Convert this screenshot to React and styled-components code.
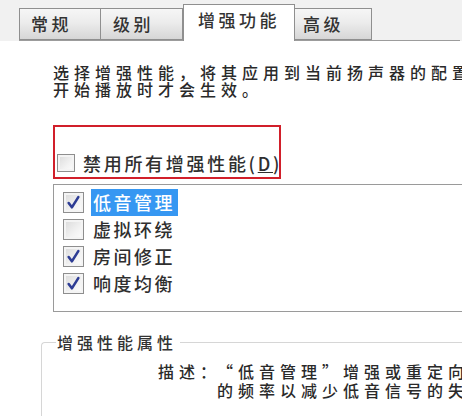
import React from 'react';
import styled, { createGlobalStyle } from 'styled-components';

const GlobalStyle = createGlobalStyle`
  html, body {
    margin: 0;
    padding: 0;
    background: #ffffff;
  }
  body {
    font-family: "Noto Sans CJK SC", "Liberation Sans", sans-serif;
    font-weight: 500;
    color: #2a2a2a;
  }
`;

const Window = styled.div`
  width: 462px;
  height: 416px;
  overflow: hidden;
  background: #ffffff;
  display: flex;
  flex-direction: column;

  & > * {
    flex-shrink: 0;
  }
`;

const TabStrip = styled.div`
  background: #f1f1f1;
  padding-left: 19px;
  padding-right: 2px;
  height: 41px;
  display: flex;
`;

const TabRow = styled.div`
  flex: 1;
  display: flex;
  align-items: flex-end;
  border-bottom: 1px solid #9c9c9c;
`;

const Tab = styled.div`
  box-sizing: border-box;
  width: ${(p) => p.width}px;
  height: ${(p) => (p.active ? 37 : 32)}px;
  margin-bottom: ${(p) => (p.active ? -1 : 0)}px;
  padding-left: ${(p) => p.pad}px;
  border: 1px solid #8f8f8f;
  border-bottom: ${(p) => (p.active ? 'none' : '1px solid #8f8f8f')};
  border-left: ${(p) => (p.first || p.active ? '1px solid #8f8f8f' : 'none')};
  background: ${(p) =>
    p.active ? '#ffffff' : 'linear-gradient(#f6f6f6 0%, #ececec 45%, #d6d6d6 100%)'};
  font-size: 17px;
  letter-spacing: 3.5px;
  line-height: 30px;
  color: #333;
  white-space: nowrap;
  position: relative;
  z-index: ${(p) => (p.active ? 2 : 1)};
`;

const Intro = styled.p`
  margin: 23px 0 0 53px;
  font-size: 16px;
  line-height: 17px;
  letter-spacing: 5px;
  white-space: nowrap;
  color: #2a2a2a;
`;

const Highlight = styled.div`
  box-sizing: border-box;
  margin: 27px 0 0 53px;
  width: 228px;
  height: 54px;
  border: 2.5px solid #d11f2a;
  display: flex;
  align-items: flex-end;
  padding: 0 0 3px 2px;
`;

const CheckRow = styled.label`
  display: flex;
  align-items: center;
  gap: ${(p) => p.gap}px;
  font-size: ${(p) => p.size}px;
  letter-spacing: ${(p) => p.spacing}px;
  line-height: ${(p) => p.height}px;
  height: ${(p) => p.height}px;
  white-space: nowrap;
  color: #2f2f2f;
`;

const Box = styled.span`
  box-sizing: border-box;
  width: ${(p) => p.size}px;
  height: ${(p) => p.size}px;
  border: 1px solid #8e8e8e;
  background: linear-gradient(135deg, #d9d9d9 0%, #f2f2f2 60%, #fdfdfd 100%);
  box-shadow: inset 0 0 0 2px #f4f4f4;
  display: flex;
  align-items: center;
  justify-content: center;
  flex-shrink: 0;
`;

const Caption = styled.span`
  padding: 0 3px 0 2px;
  background: ${(p) => (p.selected ? '#3697f2' : 'transparent')};
  color: ${(p) => (p.selected ? '#ffffff' : 'inherit')};
`;

const ListBox = styled.div`
  box-sizing: border-box;
  margin: 5px 0 0 53px;
  height: 128px;
  border: 1px solid #9a9a9a;
  border-right: none;
  padding: 4px 0 0 9px;
  display: flex;
  flex-direction: column;
`;

const Group = styled.fieldset`
  margin: 22px 0 0 41px;
  padding: 0;
  min-width: 0;
  border: 1px solid #d6d6d6;
  border-right: none;
  border-radius: 4px 0 0 0;
  height: 120px;
`;

const GroupTitle = styled.legend`
  margin-left: 14px;
  padding: 0 3px 0 1px;
  font-size: 16px;
  line-height: 16px;
  letter-spacing: 4px;
  color: #333;
`;

const DescRow = styled.div`
  display: flex;
  margin: 12px 0 0 116px;
  font-size: 16px;
  line-height: 19px;
  letter-spacing: 5px;
  color: #2a2a2a;
  white-space: nowrap;
`;

const DescLabel = styled.span`
  width: 59px;
  flex-shrink: 0;
`;

const DescText = styled.div`
  display: flex;
  flex-direction: column;
`;

const Check = ({ checked, size }) => (
  <Box size={size}>
    {checked && (
      <svg width={size - 6} height={size - 6} viewBox="0 0 14 14">
        <path
          d="M2.5 7.5 L5.5 11.5 L11.5 2"
          fill="none"
          stroke="#2d3c94"
          strokeWidth="2.4"
          strokeLinecap="round"
          strokeLinejoin="round"
        />
      </svg>
    )}
  </Box>
);

const tabs = [
  { label: '常规', width: 82, pad: 11 },
  { label: '级别', width: 82, pad: 12 },
  { label: '增强功能', width: 112, pad: 14, active: true },
  { label: '高级', width: 77, pad: 8 },
];

const effects = [
  { label: '低音管理', checked: true, selected: true },
  { label: '虚拟环绕', checked: false },
  { label: '房间修正', checked: true },
  { label: '响度均衡', checked: true },
];

export default function App() {
  return (
    <>
      <GlobalStyle />
      <Window>
        <TabStrip>
          <TabRow>
            {tabs.map((t, i) => (
              <Tab key={t.label} width={t.width} pad={t.pad} active={t.active} first={i === 0}>
                {t.label}
              </Tab>
            ))}
          </TabRow>
        </TabStrip>

        <Intro>
          选择增强性能，将其应用到当前扬声器的配置。
          <br />
          开始播放时才会生效。
        </Intro>

        <Highlight>
          <CheckRow gap={8} size={18} spacing={2.7} height={22}>
            <Check size={18} />
            <span>
              禁用所有增强性能(<u>D</u>)
            </span>
          </CheckRow>
        </Highlight>

        <ListBox>
          {effects.map((e) => (
            <CheckRow key={e.label} gap={7} size={18} spacing={2.5} height={27}>
              <Check size={21} checked={e.checked} />
              <Caption selected={e.selected}>{e.label}</Caption>
            </CheckRow>
          ))}
        </ListBox>

        <Group>
          <GroupTitle>增强性能属性</GroupTitle>
          <DescRow>
            <DescLabel>描述：</DescLabel>
            <DescText>
              <span>“低音管理”增强或重定向</span>
              <span>的频率以减少低音信号的失真</span>
            </DescText>
          </DescRow>
        </Group>
      </Window>
    </>
  );
}
